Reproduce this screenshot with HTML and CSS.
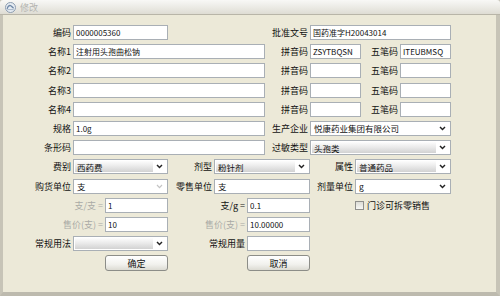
FILE: index.html
```html
<!DOCTYPE html>
<html lang="zh-CN">

<head>
    <meta charset="UTF-8">
    <title>修改</title>
    <link rel="stylesheet" href="styles.css">
</head>

<body>

    <div class="window">
        <div class="titlebar">
            <svg class="app-icon" width="11" height="11" viewBox="0 0 11 11">
                <circle cx="5.5" cy="5.5" r="5" fill="#e6ecf2" stroke="#8d9db0" stroke-width="1"/>
                <path d="M2.2 6.8 C2.6 4.6 4 3.2 5.5 3.6 C7 4 7.2 6 8.8 5.8" fill="none" stroke="#6f88a6" stroke-width="1.3"/>
                <path d="M2.4 7.6 L8.6 7.6" stroke="#9fb0c4" stroke-width="0.9"/>
            </svg>
            <span class="title">修改</span>
        </div>

        <div class="form">
            <div class="row">
                <label class="lbl w70">编码</label>
                <input class="txt w95" type="text" value="0000005360">
                <label class="lbl w142">批准文号</label>
                <input class="txt w141" type="text" value="国药准字H20043014">
            </div>

            <div class="row">
                <label class="lbl w70">名称1</label>
                <input class="txt w192" type="text" value="注射用头孢曲松钠">
                <label class="lbl w45">拼音码</label>
                <input class="txt w51" type="text" value="ZSYTBQSN">
                <label class="lbl w39">五笔码</label>
                <input class="txt w51" type="text" value="ITEUBMSQ">
            </div>

            <div class="row">
                <label class="lbl w70">名称2</label>
                <input class="txt w192" type="text">
                <label class="lbl w45">拼音码</label>
                <input class="txt w51" type="text">
                <label class="lbl w39">五笔码</label>
                <input class="txt w51" type="text">
            </div>

            <div class="row">
                <label class="lbl w70">名称3</label>
                <input class="txt w192" type="text">
                <label class="lbl w45">拼音码</label>
                <input class="txt w51" type="text">
                <label class="lbl w39">五笔码</label>
                <input class="txt w51" type="text">
            </div>

            <div class="row">
                <label class="lbl w70">名称4</label>
                <input class="txt w192" type="text">
                <label class="lbl w45">拼音码</label>
                <input class="txt w51" type="text">
                <label class="lbl w39">五笔码</label>
                <input class="txt w51" type="text">
            </div>

            <div class="row">
                <label class="lbl w70">规格</label>
                <input class="txt w192" type="text" value="1.0g">
                <label class="lbl w45">生产企业</label>
                <div class="combo white w141"><span class="combo-text">悦康药业集团有限公司</span><span class="arrow"><svg width="7" height="5" viewBox="0 0 7 5"><path d="M1 1 L3.5 3.6 L6 1" fill="none" stroke="#222" stroke-width="1.4"/></svg></span></div>
            </div>

            <div class="row">
                <label class="lbl w70">条形码</label>
                <input class="txt w192" type="text">
                <label class="lbl w45">过敏类型</label>
                <div class="combo w141"><span class="combo-text">头孢类</span><span class="arrow"><svg width="7" height="5" viewBox="0 0 7 5"><path d="M1 1 L3.5 3.6 L6 1" fill="none" stroke="#222" stroke-width="1.4"/></svg></span></div>
            </div>

            <div class="row">
                <label class="lbl w70">费别</label>
                <div class="combo w95"><span class="combo-text">西药费</span><span class="arrow"><svg width="7" height="5" viewBox="0 0 7 5"><path d="M1 1 L3.5 3.6 L6 1" fill="none" stroke="#222" stroke-width="1.4"/></svg></span></div>
                <label class="lbl w46">剂型</label>
                <div class="combo w96"><span class="combo-text">粉针剂</span><span class="arrow"><svg width="7" height="5" viewBox="0 0 7 5"><path d="M1 1 L3.5 3.6 L6 1" fill="none" stroke="#222" stroke-width="1.4"/></svg></span></div>
                <label class="lbl w45">属性</label>
                <div class="combo w96"><span class="combo-text">普通药品</span><span class="arrow"><svg width="7" height="5" viewBox="0 0 7 5"><path d="M1 1 L3.5 3.6 L6 1" fill="none" stroke="#222" stroke-width="1.4"/></svg></span></div>
            </div>

            <div class="row">
                <label class="lbl w70">购货单位</label>
                <div class="combo white w95"><span class="combo-text">支</span><span class="arrow"><svg width="7" height="5" viewBox="0 0 7 5"><path d="M1 1 L3.5 3.6 L6 1" fill="none" stroke="#c4c4c4" stroke-width="1.2"/></svg></span></div>
                <label class="lbl w46">零售单位</label>
                <div class="combo white w96"><span class="combo-text">支</span></div>
                <label class="lbl w45">剂量单位</label>
                <div class="combo white w96"><span class="combo-text">g</span><span class="arrow"><svg width="7" height="5" viewBox="0 0 7 5"><path d="M1 1 L3.5 3.6 L6 1" fill="none" stroke="#222" stroke-width="1.4"/></svg></span></div>
            </div>

            <div class="row">
                <label class="lbl muted w102">支/支 =</label>
                <input class="txt w63" type="text" value="1">
                <label class="lbl w79">支/g =</label>
                <input class="txt w63" type="text" value="0.1">
                <div class="check"><span class="box"></span><span>门诊可拆零销售</span></div>
            </div>

            <div class="row">
                <label class="lbl muted w102">售价(支) =</label>
                <input class="txt w63" type="text" value="10">
                <label class="lbl muted w79">售价(支) =</label>
                <input class="txt w63" type="text" value="10.00000">
            </div>

            <div class="row">
                <label class="lbl w70">常规用法</label>
                <div class="combo w95"><span class="combo-text"></span><span class="arrow"><svg width="7" height="5" viewBox="0 0 7 5"><path d="M1 1 L3.5 3.6 L6 1" fill="none" stroke="#222" stroke-width="1.4"/></svg></span></div>
                <label class="lbl w79">常规用量</label>
                <input class="txt w63" type="text">
            </div>

            <div class="row actions">
                <button class="btn">确定</button>
                <button class="btn">取消</button>
            </div>
        </div>
    </div>

</body>

</html>
```

FILE: styles.css
```css
/* Reset */
* {
    margin: 0;
    padding: 0;
    box-sizing: border-box;
}

body {
    width: 500px;
    height: 296px;
    overflow: hidden;
    font-family: "Noto Sans CJK SC", "DejaVu Sans", sans-serif;
    font-size: 9px;
    color: #111;
    background-color: #ece9d8;
}

/* Window frame */
.window {
    width: 500px;
    height: 296px;
    background-color: #ece9d8;
    border-left: 3px solid #c7c4b7;
    border-right: 4px solid #c7c4b7;
    border-bottom: 4px solid #bdbaae;
}

.titlebar {
    height: 15px;
    display: flex;
    align-items: center;
    gap: 4px;
    padding-left: 3px;
    margin-left: -3px;
    margin-right: -4px;
    background: linear-gradient(#f8f8f6, #e9e8e2 60%, #dedcd3);
    border-bottom: 1px solid #b8b5a8;
    border-radius: 3px 3px 0 0;
}

.app-icon {
    margin-left: 2px;
}

.title {
    color: #b4b4b0;
    font-size: 9px;
}

/* Form rows */
.form {
    padding-top: 10px;
}

.row {
    display: flex;
    height: 15px;
    margin-bottom: 4.2px;
}

.row > * {
    flex: none;
}

.lbl {
    display: flex;
    align-items: center;
    justify-content: flex-end;
    padding-right: 2px;
    white-space: nowrap;
    color: #111;
}

.lbl.muted {
    color: #a9a9a6;
}

/* widths */
.w39 { width: 39px; }
.w45 { width: 45px; }
.w46 { width: 46px; }
.w51 { width: 51px; }
.w63 { width: 63px; }
.w70 { width: 70px; }
.w79 { width: 79px; }
.w95 { width: 95px; }
.w96 { width: 96px; }
.w102 { width: 102px; }
.w141 { width: 141px; }
.w142 { width: 142px; }
.w192 { width: 192px; }

.txt {
    height: 15px;
    border: 1px solid #a9afb5;
    background-color: #fff;
    font-family: inherit;
    font-size: 8px;
    color: #111;
    padding: 0 2px;
    outline: none;
}

.combo {
    height: 15px;
    display: flex;
    border: 1px solid #a9afb5;
    background-color: #fff;
    padding: 1px;
    font-size: 8.5px;
}

.combo-text {
    flex: 1;
    display: flex;
    align-items: center;
    padding-left: 2px;
    background: linear-gradient(#fdfdfd, #ebebeb 45%, #d2d2d2);
    white-space: nowrap;
    overflow: hidden;
}

.combo.white .combo-text {
    background: none;
}

.arrow {
    width: 13px;
    display: flex;
    align-items: center;
    justify-content: center;
    background-color: #fff;
}

/* Checkbox */
.check {
    display: flex;
    align-items: center;
    gap: 3px;
    margin-left: 45px;
    white-space: nowrap;
}

.check .box {
    width: 9px;
    height: 9px;
    border: 1px solid #8f8f8c;
    background: linear-gradient(#dcdcd6, #f7f7f4);
}

/* Buttons */
.actions {
    height: 16px;
    margin-top: 3.6px;
    padding-left: 102px;
    gap: 79px;
}

.btn {
    width: 63px;
    height: 16px;
    border: 1px solid #8c8d88;
    border-radius: 3px;
    background: linear-gradient(#ffffff, #f1f1ed 60%, #dcdbd3);
    font-family: inherit;
    font-size: 9px;
    color: #111;
}
```
